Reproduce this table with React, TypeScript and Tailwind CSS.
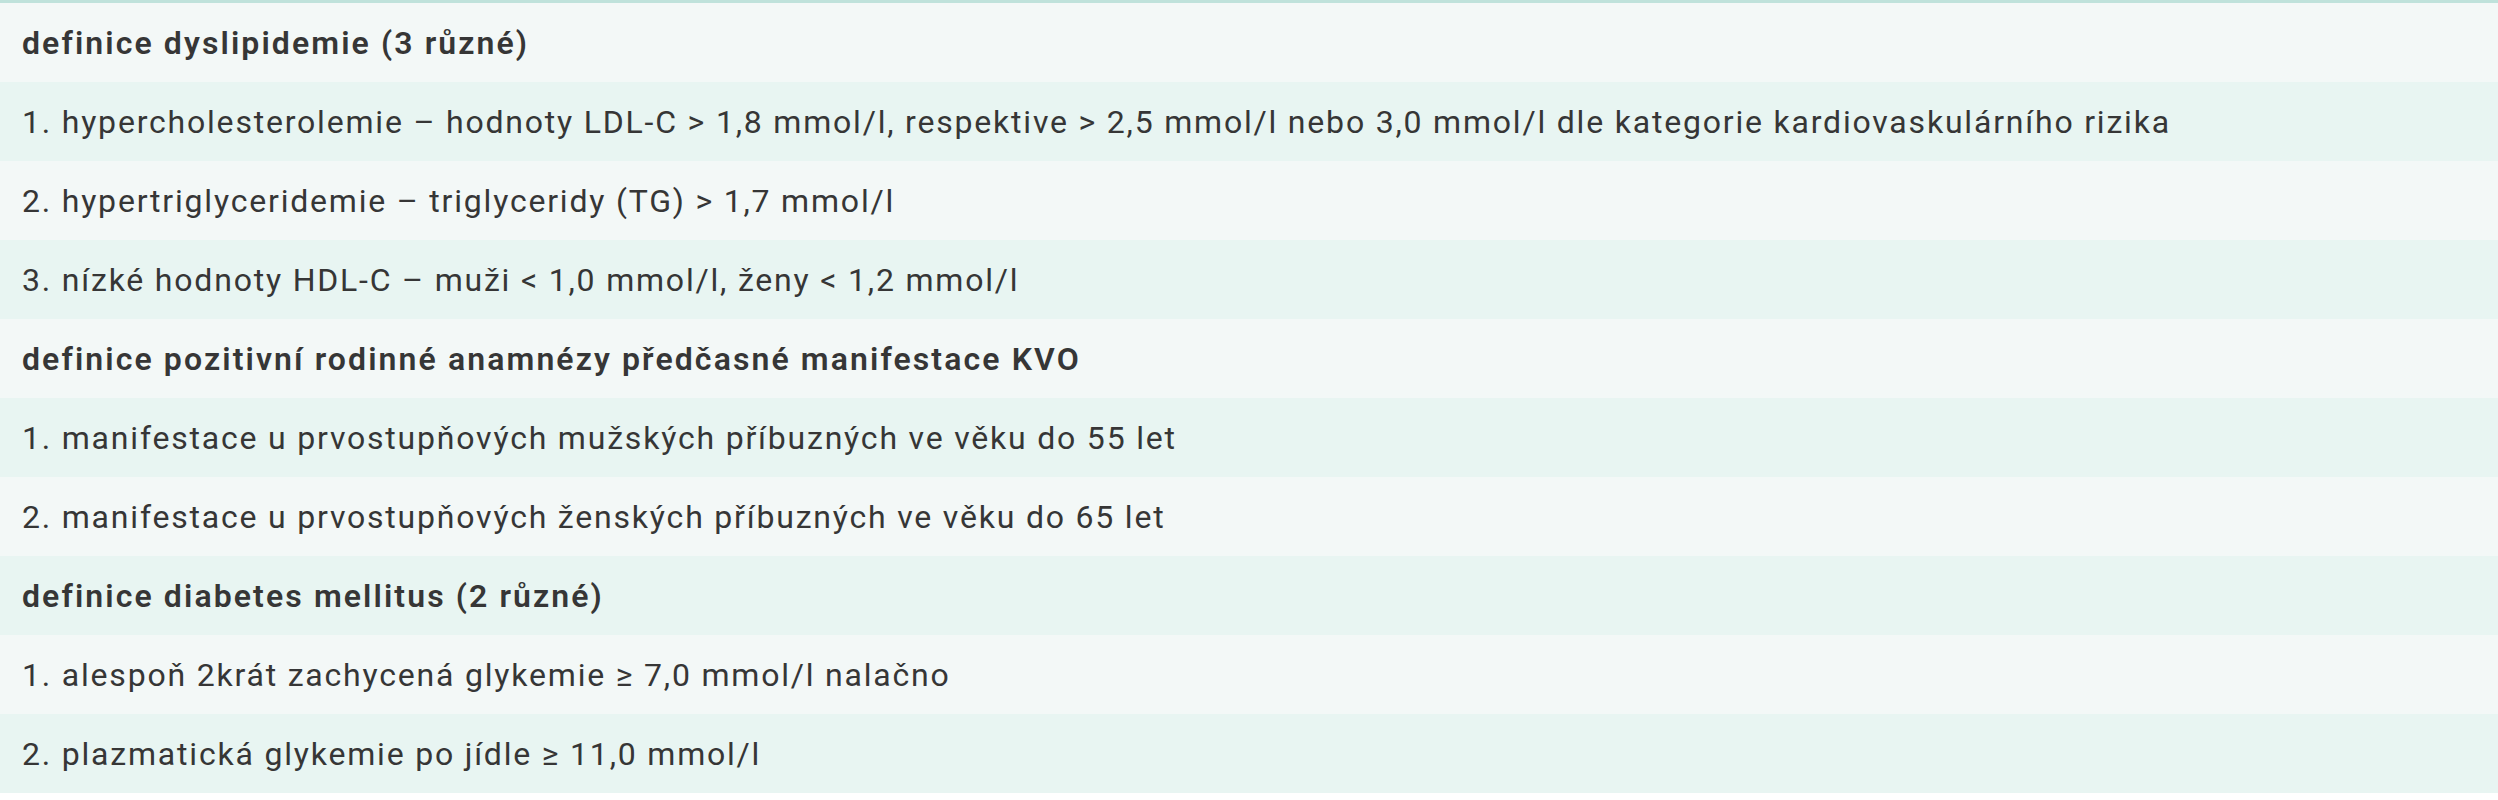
import React from "react";

type Row = { text: string; head?: boolean };

const rows: Row[] = [
  { text: "definice dyslipidemie (3 různé)", head: true },
  { text: "1. hypercholesterolemie – hodnoty LDL-C > 1,8 mmol/l, respektive > 2,5 mmol/l nebo 3,0 mmol/l dle kategorie kardiovaskulárního rizika" },
  { text: "2. hypertriglyceridemie – triglyceridy (TG) > 1,7 mmol/l" },
  { text: "3. nízké hodnoty HDL-C – muži < 1,0 mmol/l, ženy < 1,2 mmol/l" },
  { text: "definice pozitivní rodinné anamnézy předčasné manifestace KVO", head: true },
  { text: "1. manifestace u prvostupňových mužských příbuzných ve věku do 55 let" },
  { text: "2. manifestace u prvostupňových ženských příbuzných ve věku do 65 let" },
  { text: "definice diabetes mellitus (2 různé)", head: true },
  { text: "1. alespoň 2krát zachycená glykemie ≥ 7,0 mmol/l nalačno" },
  { text: "2. plazmatická glykemie po jídle ≥ 11,0 mmol/l" },
];

export default function App() {
  return (
    <div className="w-[2498px] min-h-[800px] bg-white" style={{ fontFamily: "Roboto, 'Liberation Sans', sans-serif" }}>
      <div className="border-t-[3px] border-[#bfe2db]">
        {rows.map((r, i) => (
          <div
            key={i}
            className={`flex h-[79px] items-center pl-[22px] text-[32px] text-[#363636] ${i % 2 === 0 ? "bg-[#f3f8f7]" : "bg-[#e8f5f2]"} ${r.head ? "font-semibold tracking-[2.1px]" : "font-normal tracking-[1.8px]"}`}
          >
            {r.text}
          </div>
        ))}
      </div>
    </div>
  );
}
